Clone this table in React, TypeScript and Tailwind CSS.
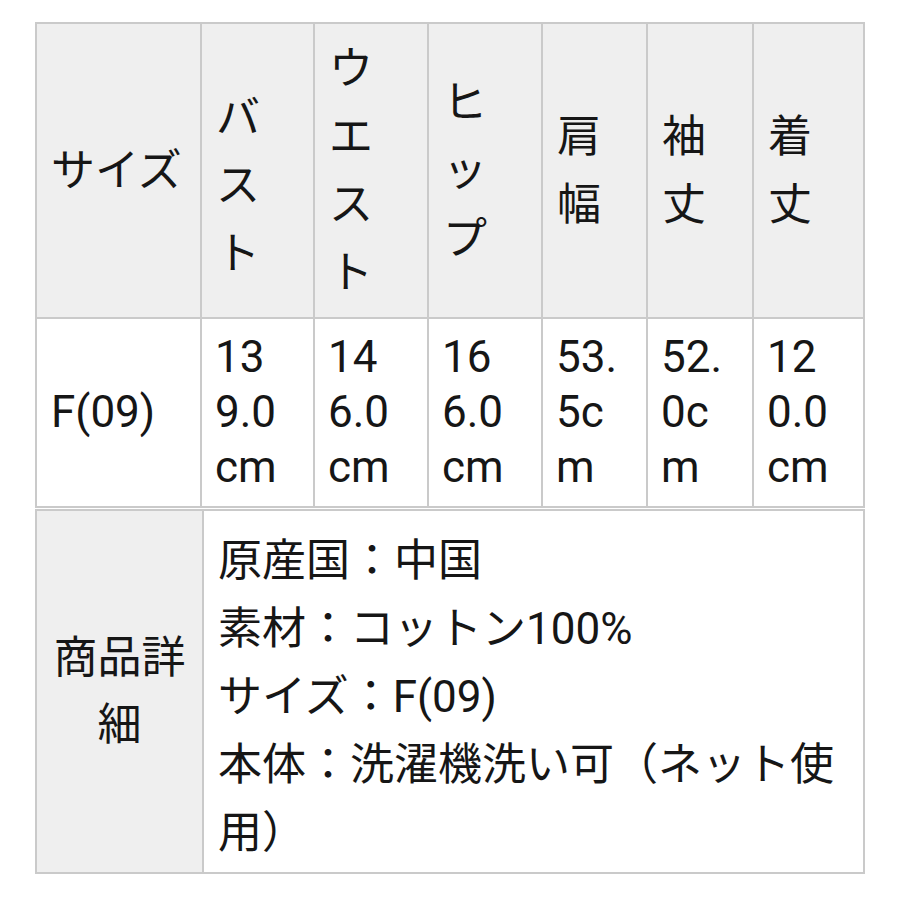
import React from 'react';

const FONT = { fontFamily: '"Roboto", "Noto Sans CJK JP", sans-serif' };

const headers: { lines: string[]; shift?: boolean }[] = [
  { lines: ['サイズ'] },
  { lines: ['バ', 'ス', 'ト'], shift: true },
  { lines: ['ウ', 'エ', 'ス', 'ト'] },
  { lines: ['ヒ', 'ッ', 'プ'] },
  { lines: ['肩', '幅'] },
  { lines: ['袖', '丈'] },
  { lines: ['着', '丈'] },
];

const values: string[][] = [
  ['13', '9.0', 'cm'],
  ['14', '6.0', 'cm'],
  ['16', '6.0', 'cm'],
  ['53.', '5c', 'm'],
  ['52.', '0c', 'm'],
  ['12', '0.0', 'cm'],
];

const details = [
  '原産国：中国',
  '素材：コットン100%',
  'サイズ：F(09)',
  '本体：洗濯機洗い可（ネット使',
  '用）',
];

export default function App() {
  return (
    <div className="w-[900px] h-[900px] bg-white text-[#161616] text-[44px] font-normal pt-[22px] pl-[35px]" style={FONT}>
      {/* SIZE TABLE */}
      <div className="grid w-[830px] grid-cols-[163px_111px_112px_112px_103px_104px_109px] grid-rows-[293px_187px] gap-[2px] p-[2px] bg-[#cacaca]">
        {headers.map((h, i) => (
          <div
            key={`h-${i}`}
            className={`bg-[#efefef] flex flex-col justify-center px-[14px] leading-[68px] whitespace-nowrap ${h.shift ? 'pt-[30px]' : ''}`}
          >
            {h.lines.map((l, j) => (
              <span key={j} className="block">{l}</span>
            ))}
          </div>
        ))}

        <div className="bg-white flex items-center px-[14px] leading-[55px]">F(09)</div>
        {values.map((lines, i) => (
          <div key={`v-${i}`} className="bg-white flex flex-col justify-center px-[13px] leading-[55px] whitespace-nowrap">
            {lines.map((l, j) => (
              <span key={j} className="block">{l}</span>
            ))}
          </div>
        ))}
      </div>

      {/* DETAIL TABLE */}
      <div className="grid w-[830px] mt-[1px] grid-cols-[165px_659px] grid-rows-[361px] gap-[2px] p-[2px] bg-[#cacaca]">
        <div className="bg-[#efefef] flex flex-col justify-center items-center leading-[67px]">
          <span className="block">商品詳</span>
          <span className="block">細</span>
        </div>
        <div className="bg-white flex flex-col justify-center px-[14px] pt-[10px] leading-[68px] whitespace-nowrap">
          {details.map((d, i) => (
            <span key={i} className="block">{d}</span>
          ))}
        </div>
      </div>
    </div>
  );
}
